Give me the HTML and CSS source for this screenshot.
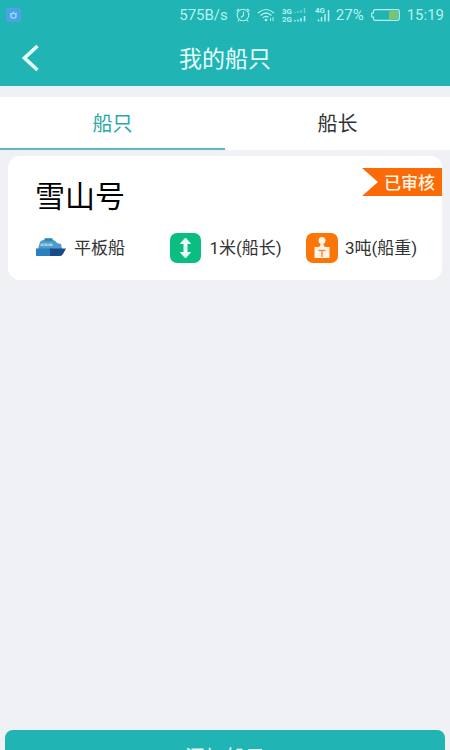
FILE: index.html
```html
<!DOCTYPE html>
<html lang="zh-CN">
<head>
<meta charset="utf-8">
<meta name="viewport" content="width=device-width, initial-scale=1">
<title>我的船只</title>
<link rel="stylesheet" href="styles.css">
</head>
<body>
<div class="app">
  <div class="status">
    <svg class="status-app" width="15" height="14" viewBox="0 0 15 14" aria-hidden="true">
      <rect width="15" height="14" rx="2" fill="#4aa3e6"/>
      <path d="M5 5.500V8.500Q5 10 7.500 10T10 8.500V5.500Q8.500 6.500 7.500 4.500Q6.500 6.500 5 5.500Z" fill="none" stroke="#a5e4fa" stroke-width="1.200"/>
    </svg>
    <span class="speed">575B/s</span>
    <svg width="16" height="16" viewBox="0 0 16 16" fill="none" stroke="#b4f3ef" stroke-width="1.100" aria-hidden="true">
      <circle cx="8" cy="8" r="5.800"/><path d="M8.500 4.500V8.500L6 10.500M1.500 4L4 1.800M12 1.800L14.500 4M4 13L2.800 14.500M12 13L13.200 14.500"/>
    </svg>
    <svg class="wifi" width="18" height="14" viewBox="0 0 18 14" fill="none" stroke="#b4f3ef" stroke-width="1.200" aria-hidden="true">
      <path d="M1 5Q9 -2 17 5M3.500 7.500Q9 2.500 14.500 7.500M6 9.800Q9 7 11.500 9.300"/><circle cx="9" cy="12" r="1.300" fill="#b4f3ef" stroke="none"/><path d="M13.500 13V10M16 13V9" stroke-width="1"/>
    </svg>
    <svg class="dual" width="25" height="16" viewBox="0 0 25 16" aria-hidden="true">
      <text x="0" y="7" class="net">3G</text><text x="0" y="15" class="net">2G</text>
      <path d="M13 6V5M16 6V4M19 6V3M22.500 6V1" stroke="#6fd2ce" stroke-width="1.500"/>
      <path d="M13 14.500V13M16 14.500V12.500M19 14.500V11M22.500 14.500V9" stroke="#b4f3ef" stroke-width="1.500"/>
    </svg>
    <svg class="single" width="15" height="16" viewBox="0 0 15 16" aria-hidden="true">
      <text x="0" y="6" class="net">4G</text>
      <path d="M3.500 14.500V12.500M6.500 14.500V10M10 14.500V7M13.500 14.500V3" stroke="#b4f3ef" stroke-width="1.500"/>
    </svg>
    <span>27%</span>
    <svg class="battery" width="29" height="12" viewBox="0 0 29 12" aria-hidden="true">
      <path d="M4 .700H26.500Q28.300.700 28.300 2.500V9.500Q28.300 11.300 26.500 11.300H4Q2.500 11.300 2.500 9.500V8H.700V4H2.500V2.500Q2.500.700 4 .700Z" fill="none" stroke="#b4f3ef" stroke-width="1.200"/>
      <rect x="18" y="2" width="9" height="8" fill="#7dc46a"/>
    </svg>
    <span class="clock">15:19</span>
  </div>
  <header class="header">
    <button class="back" type="button" aria-label="返回">
      <svg width="18" height="28" viewBox="0 0 18 28" fill="none" stroke="#e6fffd" stroke-width="3.600"><path d="M15.500 2L2.500 14L15.500 26"/></svg>
    </button>
    <h1 class="title">我的船只</h1>
  </header>
  <nav class="tabs">
    <a class="tab active" href="#ships" aria-current="page">船只</a>
    <a class="tab" href="#captains">船长</a>
  </nav>
  <main class="list" id="ships">
    <article class="card">
      <span class="badge">已审核</span>
      <h2 class="name">雪山号</h2>
      <ul class="facts">
        <li class="fact">
          <svg width="32" height="32" viewBox="0 0 32 32" aria-hidden="true">
            <path d="M3 17L5 10Q6 8 9 8L10 6H17L18 8Q21 8.500 22 11L26 12L27 17Z" fill="#4b9ccc"/>
            <path d="M10 7H17L18 9H9Z" fill="#2f87bd"/>
            <path d="M6 11.500H17L18 14H5.300Z" fill="#a9d2d6"/>
            <path d="M9 11V15M13 11V15" stroke="#65aace" stroke-width="1"/>
            <path d="M1 16.500H17V24H1Z" fill="#2a7fbd"/>
            <path d="M15 16.500H31L28 22Q27 24 25 24H15Z" fill="#174c88"/>
          </svg>
          <span>平板船</span>
        </li>
        <li class="fact">
          <svg width="32" height="32" viewBox="0 0 32 32" aria-hidden="true">
            <rect x="0" y="1" width="31" height="30" rx="7" fill="#0bbd80"/>
            <path d="M15.500 6L20.500 11.500H17V20.500H20.500L15.500 26L10.500 20.500H14V11.500H10.500Z" fill="#eafff7" stroke="#eafff7" stroke-linejoin="round"/>
          </svg>
          <span>1米(船长)</span>
        </li>
        <li class="fact">
          <svg width="32" height="32" viewBox="0 0 32 32" aria-hidden="true">
            <rect x="0" y="1" width="32" height="30" rx="7" fill="#fb7507"/>
            <circle cx="16" cy="8.500" r="3.500" fill="#fff4e6"/>
            <path d="M14.500 10H17.500V13Q18 15 20 15H23.500V26H8.500V15H12Q14 15 14.500 13Z" fill="#fff4e6"/>
            <path d="M12.500 18.500H19.500M16 18.500V25" fill="none" stroke="#f28a3c" stroke-width="1.400"/>
          </svg>
          <span>3吨(船重)</span>
        </li>
      </ul>
    </article>
  </main>
  <button class="add" type="button">添加船只</button>
</div>
</body>
</html>
```
FILE: styles.css
```css
* { box-sizing: border-box; }

body {
  margin: 0;
  overflow: hidden;
  background: #eff1f5;
  color: #333;
  font-family: Roboto, "Noto Sans CJK SC", sans-serif;
}

h1, h2, ul { margin: 0; padding: 0; font-weight: 400; }

svg { display: block; flex: none; }

.app { display: flex; flex-direction: column; height: 100vh; }

.status {
  display: flex;
  flex: none;
  align-items: center;
  height: 30px;
  padding: 0 6px;
  background: #20b4b4;
  color: #b4f3ef;
  font-size: 15px;
}

.speed { margin-left: auto; margin-right: 7px; }
.wifi { margin-left: 6px; }
.dual { margin-left: 7px; }
.single { margin: 0 6px 0 8px; }
.battery { margin: 0 7px; }
.net { fill: #b4f3ef; font-size: 8px; font-weight: 700; }

.header {
  display: grid;
  flex: none;
  grid-template-columns: 60px 1fr 60px;
  align-items: center;
  height: 56px;
  background: #20b4b4;
}

.back {
  padding: 0 0 0 22px;
  border: 0;
  background: none;
}

.title {
  padding-top: 4px;
  color: #e6fffd;
  font-size: 23px;
  line-height: 32px;
  text-align: center;
}

.tabs {
  display: flex;
  flex: none;
  margin-top: 11px;
  background: #fff;
}

.tab {
  flex: 1;
  padding-top: 4px;
  border-bottom: 2px solid transparent;
  color: #333;
  font-size: 20px;
  line-height: 47px;
  text-align: center;
  text-decoration: none;
}

.tab.active { border-color: #5bb9b9; color: #2aa9a8; }

.list { flex: 1; padding: 6px 8px; }

.card {
  position: relative;
  padding: 20px 20px 16px 27px;
  border-radius: 12px;
  background: #fff;
}

.badge {
  position: absolute;
  top: 12px;
  right: 0;
  padding: 2px 7px 0 22px;
  background: #fb6a07;
  clip-path: polygon(0 0, 100% 0, 100% 100%, 0 100%, 16px 50%);
  color: #fff4e6;
  font-size: 17px;
  font-weight: 500;
  line-height: 26px;
}

.name { color: #000; font-size: 30px; line-height: 42px; }

.facts {
  display: grid;
  grid-template-columns: 7fr 7fr 6fr;
  margin-top: 14px;
  list-style: none;
}

.fact {
  display: flex;
  align-items: center;
  gap: 7px;
  font-size: 17px;
  line-height: 32px;
  white-space: nowrap;
}

.add {
  flex: none;
  height: 52px;
  margin: 0 5px -32px;
  padding: 0;
  border: 0;
  border-radius: 8px;
  background: #20b4b4;
  color: #e6fffd;
  font-family: inherit;
  font-size: 20px;
}
```
